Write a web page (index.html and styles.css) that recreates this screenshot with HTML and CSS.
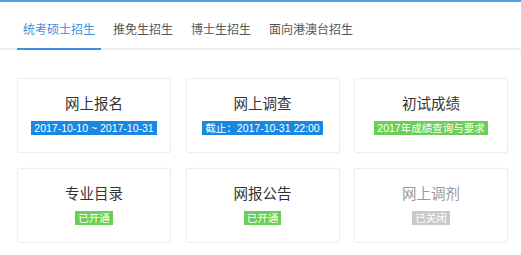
FILE: index.html
```html
<!DOCTYPE html>
<html lang="zh-CN">

<head>
    <meta charset="UTF-8">
    <meta name="viewport" content="width=device-width, initial-scale=1.0">
    <title>研究生招生</title>
    <link rel="stylesheet" href="styles.css">
</head>

<body>

    <nav class="tabs">
        <a class="tab active">统考硕士招生</a>
        <a class="tab">推免生招生</a>
        <a class="tab">博士生招生</a>
        <a class="tab">面向港澳台招生</a>
    </nav>

    <section class="entries">
        <div class="card">
            <h2>网上报名</h2>
            <span class="badge blue">2017-10-10 ~ 2017-10-31</span>
        </div>
        <div class="card">
            <h2>网上调查</h2>
            <span class="badge blue">截止：2017-10-31 22:00</span>
        </div>
        <div class="card">
            <h2>初试成绩</h2>
            <span class="badge green">2017年成绩查询与要求</span>
        </div>
        <div class="card">
            <h2>专业目录</h2>
            <span class="badge green">已开通</span>
        </div>
        <div class="card">
            <h2>网报公告</h2>
            <span class="badge green">已开通</span>
        </div>
        <div class="card closed">
            <h2>网上调剂</h2>
            <span class="badge gray">已关闭</span>
        </div>
    </section>

</body>

</html>
```

FILE: styles.css
```css
* {
    margin: 0;
    padding: 0;
    box-sizing: border-box;
}

body {
    font-family: "Liberation Sans", "Noto Sans CJK SC", sans-serif;
    background-color: #fff;
    color: #333;
    border-top: 2px solid #4d9ee8;
}

.tabs {
    display: flex;
    gap: 6px;
    padding-left: 17px;
    border-bottom: 2px solid #f0f0f0;
}

.tab {
    font-size: 12px;
    line-height: 16px;
    padding: 20px 6px 10px;
    color: #555;
    margin-bottom: -2px;
    border-bottom: 2px solid transparent;
}

.tab.active {
    color: #3d8fe3;
    border-bottom-color: #3d8fe3;
}

.entries {
    display: grid;
    grid-template-columns: repeat(3, 1fr);
    column-gap: 14.5px;
    row-gap: 15px;
    padding: 28px 13px 0 17px;
}

.card {
    border: 1px solid #ededed;
    border-radius: 2px;
    box-shadow: 0 0 2px rgba(0, 0, 0, 0.03);
    height: 75px;
    padding-top: 16px;
    display: flex;
    flex-direction: column;
    align-items: center;
}

.card h2 {
    font-size: 14.5px;
    font-weight: normal;
    line-height: 18px;
    color: #333;
    margin-bottom: 8px;
}

.card.closed h2 {
    color: #999;
}

.badge {
    font-size: 10.5px;
    line-height: 14px;
    padding: 0 3px;
    color: #fff;
}

.badge.blue {
    background-color: #1a88e0;
}

.badge.green {
    background-color: #69cf58;
}

.badge.gray {
    background-color: #c9c9c9;
}
```
